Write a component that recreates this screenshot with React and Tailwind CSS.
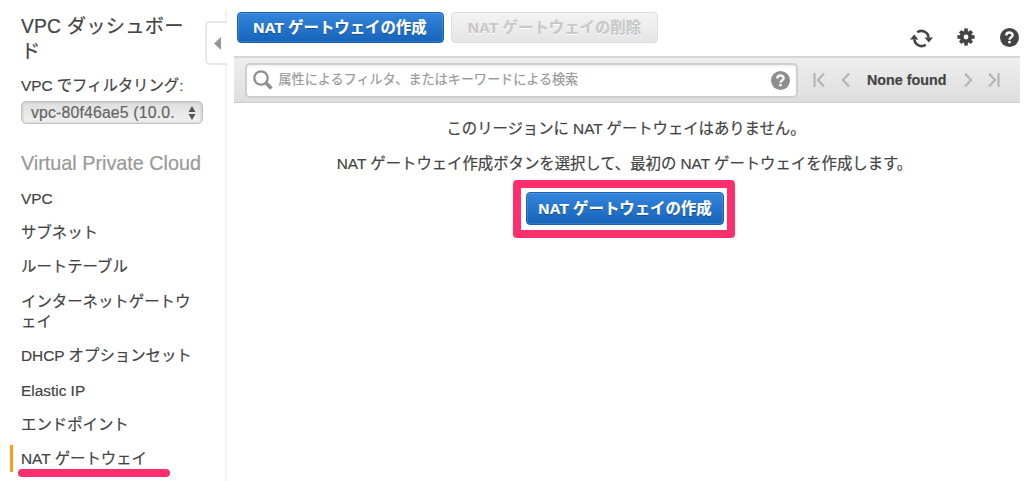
import React from 'react';

const NAV_ITEMS = [
  'VPC',
  'サブネット',
  'ルートテーブル',
  'インターネットゲートウェイ',
  'DHCP オプションセット',
  'Elastic IP',
  'エンドポイント',
  'NAT ゲートウェイ',
];

const HelpIcon = ({ className }) => (
  <svg className={className} viewBox="0 0 20 20">
    <circle cx="10" cy="10" r="10" fill="currentColor" />
    <path d="M6.6 8C6.6 3.8 13.3 3.9 13.3 7.6C13.3 9.8 10 9.6 10 12.4" fill="none" stroke="#f5f5f5" strokeWidth="2.6" />
    <rect x="8.6" y="13.6" width="2.8" height="2.5" fill="#f5f5f5" />
  </svg>
);

const RefreshIcon = () => (
  <svg className="h-[19px] w-[23px]" viewBox="0 0 23 19" fill="none" stroke="#444" strokeWidth="2.6">
    <path d="M7.2 3.2A7.3 7.3 0 0 1 18.6 8.6" />
    <path d="M15.8 15.8A7.3 7.3 0 0 1 4.4 10.4" />
    <path d="M14.6 8.6H23L18.8 13.4ZM0 10.4H8.4L4.2 5.6Z" fill="#444" stroke="none" />
  </svg>
);

const GearIcon = () => (
  <svg className="h-[18px] w-[18px]" viewBox="0 0 18 18">
    <g fill="#444">
      <rect x="7.2" y="0.4" width="3.6" height="17.2" />
      <rect x="0.4" y="7.2" width="17.2" height="3.6" />
      <rect x="7.2" y="0.8" width="3.6" height="16.4" transform="rotate(45 9 9)" />
      <rect x="7.2" y="0.8" width="3.6" height="16.4" transform="rotate(-45 9 9)" />
      <circle cx="9" cy="9" r="6.2" />
    </g>
    <circle cx="9" cy="9" r="2.4" fill="#fff" />
  </svg>
);

const PagerIcon = ({ d, className }) => (
  <svg className={className} viewBox="0 0 13 16" fill="none" stroke="#b5b5b5" strokeWidth="2.2">
    <path d={d} />
  </svg>
);

const CreateButton = ({ className }) => (
  <button
    className={`${className} whitespace-nowrap rounded-[4px] border border-[#1a62b0] bg-linear-to-b from-[#3485dc] to-[#1564ba] text-[15.4px] font-bold text-white shadow-[inset_0_0_0_1px_rgba(255,255,255,0.12)] [text-shadow:0_1px_1px_rgba(0,0,0,0.35)]`}
  >
    NAT ゲートウェイの作成
  </button>
);

const Sidebar = () => (
  <aside className="relative h-[481px] w-[227px] shrink-0 pl-[21px] pt-[15px]">
    <div className="absolute bottom-0 right-0 top-[10px] w-[2px] bg-[#f2f2f2]"></div>

    {/* Collapse handle */}
    <button className="absolute right-0 top-[21px] flex h-11 w-[22px] items-center justify-center rounded-l-[5px] border-2 border-r-0 border-[#e8e8e8] bg-white">
      <svg className="h-[13px] w-[7px]" viewBox="0 0 7 13">
        <path d="M7 0V13L0 6.5Z" fill="#949494" />
      </svg>
    </button>

    <h1 className="w-[170px] break-all text-[19.3px] leading-[24.5px] tracking-[0.2px]">VPC ダッシュボード</h1>
    <p className="mt-[11px] text-[15.4px] leading-[21px] tracking-[-0.05px]">VPC でフィルタリング:</p>
    <div className="mt-[5px] flex h-[23px] w-[182px] items-center rounded-[5px] border border-[#c2c2c2] bg-linear-to-b from-[#dedede] to-[#f1f1f1] pl-[9px] pr-[6px] text-[#666] shadow-[inset_0_0_3px_rgba(0,0,0,0.2)]">
      <span className="whitespace-nowrap text-[15.8px] leading-[20px] tracking-[0.17px]">vpc-80f46ae5 (10.0.</span>
      <svg className="ml-auto h-[14px] w-[8px] shrink-0" viewBox="0 0 8 14">
        <path d="M4 0L7.5 6H0.5ZM4 14L7.5 8H0.5Z" fill="#555" />
      </svg>
    </div>

    <h2 className="mt-[27px] whitespace-nowrap text-[19.8px] leading-[24px] text-[#999]">Virtual Private Cloud</h2>
    <ul className="mt-[14px] flex flex-col gap-[13.6px] text-[15.4px] leading-[20.6px]">
      {NAV_ITEMS.map((item) => (
        <li key={item} className="w-[176px] break-all">
          {item}
        </li>
      ))}
    </ul>

    {/* Active item marker and highlight */}
    <div className="absolute left-[10px] top-[445px] h-[27px] w-[3px] bg-[#ff9c12]"></div>
    <div className="absolute left-[18px] top-[469px] h-[8px] w-[152px] rounded-full bg-[#ff2f6d]"></div>
  </aside>
);

const Toolbar = () => (
  <div className="flex h-[56px] items-start pl-[2.5px] pt-[12px]">
    <CreateButton className="h-[31px] w-[207px]" />
    <button className="ml-[7.5px] h-[31px] w-[207px] whitespace-nowrap rounded-[4px] border border-[#dedede] bg-linear-to-b from-[#f3f3f3] to-[#e5e5e5] text-[15.4px] font-bold text-[#c8c8c8] [text-shadow:0_1px_0_#fff]">
      NAT ゲートウェイの削除
    </button>
    <div className="ml-auto flex items-center pt-[17px]">
      <RefreshIcon />
      <div className="ml-[24px] -mt-[3px]">
        <GearIcon />
      </div>
      <HelpIcon className="ml-[25px] mr-[5px] -mt-[2px] h-[19px] w-[19px] text-[#444]" />
    </div>
  </div>
);

const FilterBar = () => (
  <div className="mr-[4px] flex h-[47px] items-center border-b border-t-2 border-b-[#cfcfcf] border-t-[#d6d6d6] bg-linear-to-b from-[#eee] to-[#dedede] pl-[11px]">
    <div className="flex h-[35px] w-[553px] items-center rounded-[5px] border-2 border-[#cfcfcf] bg-white pl-[6px] pr-[6px] shadow-[inset_0_2px_2px_rgba(0,0,0,0.05)]">
      <svg className="h-[20px] w-[20px] shrink-0" viewBox="0 0 20 20" fill="none" stroke="#8e8e8e">
        <circle cx="8" cy="8" r="6.7" strokeWidth="2.3" />
        <path d="M12.8 12.8L18.4 18.4" strokeWidth="3.6" />
      </svg>
      <span className="ml-[5.5px] whitespace-nowrap text-[13.1px] text-[#999]">属性によるフィルタ、またはキーワードによる検索</span>
      <HelpIcon className="ml-auto h-[19px] w-[19px] text-[#8e8e8e]" />
    </div>
    <PagerIcon className="ml-[15px] h-[16px] w-[13px]" d="M1.5 1V15M11 1.5L5 8L11 14.5" />
    <PagerIcon className="ml-[14px] h-[16px] w-[13px]" d="M9 1.5L3 8L9 14.5" />
    <span className="ml-[14px] w-[80px] whitespace-nowrap pt-[1px] text-[14.3px] font-bold">None found</span>
    <PagerIcon className="ml-[14px] h-[16px] w-[13px]" d="M4 1.5L10 8L4 14.5" />
    <PagerIcon className="ml-[13px] h-[16px] w-[13px]" d="M2 1.5L8 8L2 14.5M11.5 1V15" />
  </div>
);

const App = () => {
  return (
    <div className="flex h-[481px] w-[1024px] overflow-hidden bg-white font-['Liberation_Sans','Noto_Sans_CJK_JP',sans-serif] text-[#444] [-webkit-text-stroke:0.2px]">
      <Sidebar />
      <main className="ml-[7px] min-w-0 flex-1">
        <Toolbar />
        <FilterBar />

        {/* Empty state */}
        <div className="mr-[10px] flex flex-col items-center text-[15.4px] leading-[21px]">
          <p className="mt-[15px] whitespace-nowrap pl-[4px] tracking-[-0.05px]">このリージョンに NAT ゲートウェイはありません。</p>
          <p className="mt-[14px] whitespace-nowrap pl-[1px] tracking-[-0.03px]">NAT ゲートウェイ作成ボタンを選択して、最初の NAT ゲートウェイを作成します。</p>
          <div className="mt-[6px] flex h-[58px] w-[222px] items-center justify-center rounded-[4px] border-8 border-[#ff2f6d] pl-[2px]">
            <CreateButton className="-mt-[2px] h-[33px] w-[198px] shrink-0" />
          </div>
        </div>
      </main>
    </div>
  );
};

export default App;
